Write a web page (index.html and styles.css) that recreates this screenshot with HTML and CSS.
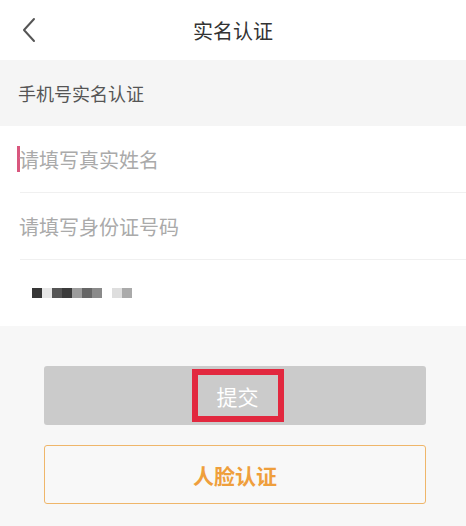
FILE: index.html
```html
<!DOCTYPE html>
<html lang="zh-CN">
<head>
    <meta charset="UTF-8">
    <meta name="viewport" content="width=device-width, initial-scale=1.0">
    <title>实名认证</title>
    <link rel="stylesheet" href="styles.css">
</head>
<body>
    <div class="header">
        <a class="back" href="#">
            <svg width="18" height="26" viewBox="0 0 18 26">
                <polyline points="14,2 4,13 14,24" fill="none" stroke="#555" stroke-width="2" stroke-linecap="round" stroke-linejoin="round"/>
            </svg>
        </a>
        <h1>实名认证</h1>
    </div>

    <div class="section-title">手机号实名认证</div>

    <div class="form">
        <div class="row">
            <span class="cursor"></span>
            <span class="placeholder">请填写真实姓名</span>
        </div>
        <div class="row">
            <span class="placeholder">请填写身份证号码</span>
        </div>
        <div class="row phone">
            <span class="mosaic">
                <i class="c1"></i><i class="c2"></i><i class="c3"></i><i class="c4"></i><i class="c5"></i><i class="c6"></i><i class="c7"></i><i class="gap"></i><i class="c8"></i><i class="c9"></i>
            </span>
        </div>
    </div>

    <div class="actions">
        <button class="btn submit"><span class="mark">提交</span></button>
        <button class="btn face">人脸认证</button>
    </div>
</body>
</html>
```

FILE: styles.css
```css
body {
    margin: 0;
    font-family: "Noto Sans CJK SC", "Noto Sans", sans-serif;
    background-color: #f7f7f7;
    width: 466px;
    height: 526px;
    overflow: hidden;
}

.header {
    height: 60px;
    background: #fff;
    display: flex;
    align-items: center;
    justify-content: center;
    position: relative;
}

.header h1 {
    margin: 0;
    font-size: 20px;
    font-weight: normal;
    color: #333;
}

.back {
    position: absolute;
    left: 20px;
    top: 17px;
    display: flex;
}

.section-title {
    height: 66px;
    display: flex;
    align-items: center;
    padding-left: 18px;
    font-size: 18px;
    color: #555;
    background: #f5f5f5;
}

.form {
    background: #fff;
}

.row {
    height: 66px;
    margin-left: 20px;
    display: flex;
    align-items: center;
    border-bottom: 1px solid #f0f0f0;
}

.row:last-child {
    border-bottom: none;
}

.placeholder {
    font-size: 20px;
    color: #aaa;
    margin-left: -1px;
}

.cursor {
    width: 3px;
    height: 26px;
    background: #d9577e;
    margin-left: -3px;
}

.mosaic {
    display: flex;
    margin-left: 12px;
}

.mosaic i {
    width: 10px;
    height: 10px;
}

.mosaic .c1 { background: #363636; }
.mosaic .c2 { background: #e6e6e6; }
.mosaic .c3 { background: #555; }
.mosaic .c4 { background: #3b3b3b; }
.mosaic .c5 { background: #9c9c9c; }
.mosaic .c6 { background: #666; }
.mosaic .c7 { background: #8a8a8a; }
.mosaic .gap { background: transparent; }
.mosaic .c8 { background: #dedede; }
.mosaic .c9 { background: #aaa; }

.actions {
    padding: 40px 40px 0 44px;
    display: flex;
    flex-direction: column;
    gap: 20px;
}

.btn {
    height: 59px;
    border-radius: 3px;
    font-family: inherit;
    display: flex;
    align-items: center;
    justify-content: center;
    padding: 0;
}

.submit {
    background: #cbcbcb;
    border: none;
    color: #fff;
    font-size: 21px;
}

.submit .mark {
    width: 80px;
    height: 41px;
    border: 6px solid #e2283f;
    display: flex;
    align-items: center;
    justify-content: center;
    margin-left: 5px;
}

.face {
    background: #f8f8f8;
    border: 1px solid #efb66a;
    color: #ef9f3c;
    font-size: 21px;
    font-weight: bold;
}
```
